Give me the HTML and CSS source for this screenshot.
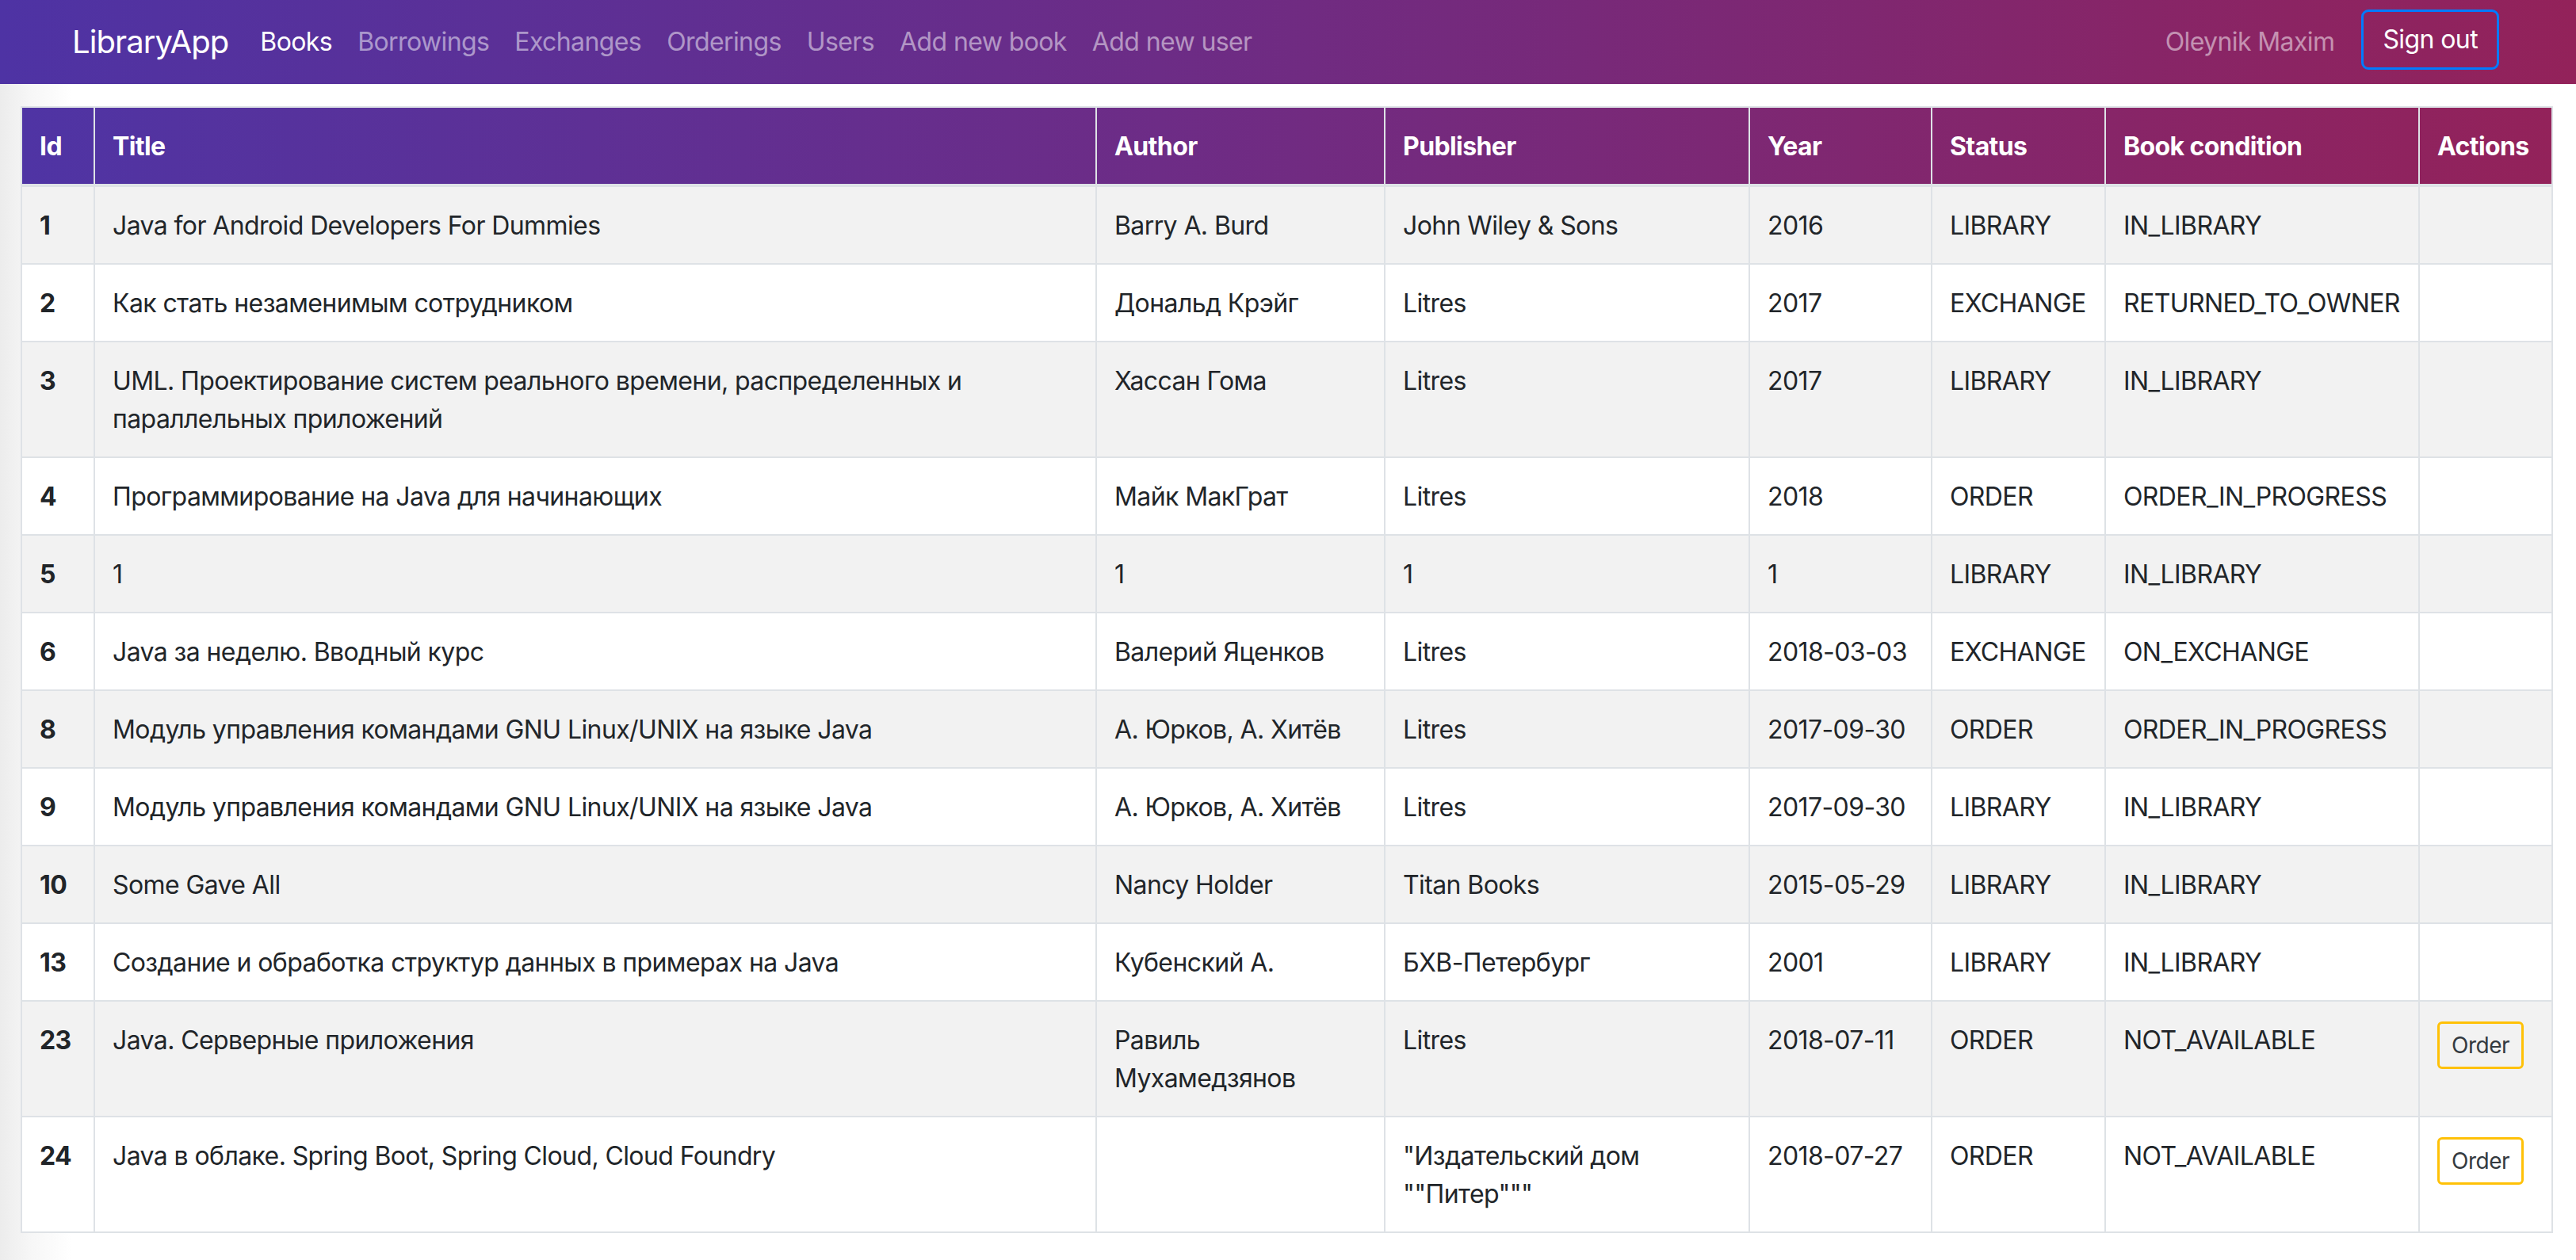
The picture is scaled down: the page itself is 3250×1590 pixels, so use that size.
FILE: index.html
```html
<!DOCTYPE html>
<html lang="en">
<head>
<meta charset="utf-8">
<title>LibraryApp</title>
<link rel="stylesheet" href="styles.css">
</head>
<body>
<nav class="navbar">
  <a class="brand" href="#">LibraryApp</a>
  <ul class="nav">
    <li><a class="nav-link active" href="#">Books</a></li>
    <li><a class="nav-link" href="#">Borrowings</a></li>
    <li><a class="nav-link" href="#">Exchanges</a></li>
    <li><a class="nav-link" href="#">Orderings</a></li>
    <li><a class="nav-link" href="#">Users</a></li>
    <li><a class="nav-link" href="#">Add new book</a></li>
    <li><a class="nav-link" href="#">Add new user</a></li>
  </ul>
  <div class="nav-right">
    <span class="nav-link user">Oleynik Maxim</span>
    <button class="btn-signout" type="button">Sign out</button>
  </div>
</nav>
<main class="content">
  <table class="books">
    <colgroup>
      <col class="c-id"><col class="c-title"><col class="c-author"><col class="c-pub"><col class="c-year"><col class="c-status"><col class="c-cond"><col class="c-act">
    </colgroup>
    <thead>
      <tr><th>Id</th><th>Title</th><th>Author</th><th>Publisher</th><th>Year</th><th>Status</th><th>Book condition</th><th>Actions</th></tr>
    </thead>
    <tbody>
      <tr><th>1</th><td>Java for Android Developers For Dummies</td><td>Barry A. Burd</td><td>John Wiley &amp; Sons</td><td>2016</td><td>LIBRARY</td><td>IN_LIBRARY</td><td></td></tr>
      <tr><th>2</th><td>Как стать незаменимым сотрудником</td><td>Дональд Крэйг</td><td>Litres</td><td>2017</td><td>EXCHANGE</td><td>RETURNED_TO_OWNER</td><td></td></tr>
      <tr><th>3</th><td>UML. Проектирование систем реального времени, распределенных и параллельных приложений</td><td>Хассан Гома</td><td>Litres</td><td>2017</td><td>LIBRARY</td><td>IN_LIBRARY</td><td></td></tr>
      <tr><th>4</th><td>Программирование на Java для начинающих</td><td>Майк МакГрат</td><td>Litres</td><td>2018</td><td>ORDER</td><td>ORDER_IN_PROGRESS</td><td></td></tr>
      <tr><th>5</th><td>1</td><td>1</td><td>1</td><td>1</td><td>LIBRARY</td><td>IN_LIBRARY</td><td></td></tr>
      <tr><th>6</th><td>Java за неделю. Вводный курс</td><td>Валерий Яценков</td><td>Litres</td><td>2018-03-03</td><td>EXCHANGE</td><td>ON_EXCHANGE</td><td></td></tr>
      <tr><th>8</th><td>Модуль управления командами GNU Linux/UNIX на языке Java</td><td>А. Юрков, А. Хитёв</td><td>Litres</td><td>2017-09-30</td><td>ORDER</td><td>ORDER_IN_PROGRESS</td><td></td></tr>
      <tr><th>9</th><td>Модуль управления командами GNU Linux/UNIX на языке Java</td><td>А. Юрков, А. Хитёв</td><td>Litres</td><td>2017-09-30</td><td>LIBRARY</td><td>IN_LIBRARY</td><td></td></tr>
      <tr><th>10</th><td>Some Gave All</td><td>Nancy Holder</td><td>Titan Books</td><td>2015-05-29</td><td>LIBRARY</td><td>IN_LIBRARY</td><td></td></tr>
      <tr><th>13</th><td>Создание и обработка структур данных в примерах на Java</td><td>Кубенский А.</td><td>БХВ-Петербург</td><td>2001</td><td>LIBRARY</td><td>IN_LIBRARY</td><td></td></tr>
      <tr><th>23</th><td>Java. Серверные приложения</td><td>Равиль Мухамедзянов</td><td>Litres</td><td>2018-07-11</td><td>ORDER</td><td>NOT_AVAILABLE</td><td><button class="btn-order" type="button">Order</button></td></tr>
      <tr><th>24</th><td>Java в облаке. Spring Boot, Spring Cloud, Cloud Foundry</td><td></td><td>"Издательский дом ""Питер"""</td><td>2018-07-27</td><td>ORDER</td><td>NOT_AVAILABLE</td><td><button class="btn-order" type="button">Order</button></td></tr>
    </tbody>
  </table>
</main>
</body>
</html>
```
FILE: styles.css
```css
html, body {
  margin: 0;
  padding: 0;
}
body {
  min-height: 1590px;
  font-family: Inter, "Noto Sans", sans-serif;
  font-size: 32px;
  line-height: 48px;
  letter-spacing: -0.6px;
  color: #212529;
  background: linear-gradient(to right, #ececec 0, #f7f7f7 40px, #ffffff 90px);
}
.navbar {
  display: flex;
  align-items: center;
  height: 106px;
  padding: 0 97px 0 91px;
  box-sizing: border-box;
  background: linear-gradient(to right, #4e33a4 0%, #6c2c86 45%, #93225a 100%);
}
.brand {
  font-size: 40px;
  line-height: 60px;
  letter-spacing: -0.9px;
  color: #fff;
  text-decoration: none;
  margin-right: 24px;
}
.nav {
  display: flex;
  list-style: none;
  margin: 0;
  padding: 0;
}
.nav-link {
  display: block;
  padding: 16px;
  color: rgba(255, 255, 255, 0.5);
  text-decoration: none;
}
.nav-link.active {
  color: #fff;
}
.nav-right {
  margin-left: auto;
  display: flex;
  align-items: center;
}
.user {
  margin-right: 18px;
}
.btn-signout {
  font-family: inherit;
  font-size: 32px;
  line-height: 48px;
  letter-spacing: -0.6px;
  color: #fff;
  background: transparent;
  border: 3px solid #007bff;
  border-radius: 9px;
  padding: 11px 24px;
  margin-top: -6px;
}
.content {
  padding: 28px 31px 30px 26px;
}
.books {
  width: 100%;
  table-layout: fixed;
  border-collapse: collapse;
  background: transparent;
}
.c-id { width: 92px; }
.c-title { width: 1264px; }
.c-author { width: 364px; }
.c-pub { width: 460px; }
.c-year { width: 230px; }
.c-status { width: 219px; }
.c-cond { width: 396px; }
.c-act { width: 168px; }
.books th, .books td {
  border: 2px solid #dee2e6;
  padding: 25px 22px 23px;
  text-align: left;
  vertical-align: top;
}
.books thead {
  background: linear-gradient(to right, #4f34a4 0%, #6d2c86 45%, #93225a 100%);
}
.books thead th {
  color: #fff;
  font-weight: 700;
  border-bottom-width: 4px;
}
.books tbody tr:nth-child(odd) {
  background: #f2f2f2;
}
.books tbody tr:nth-child(even) {
  background: #fff;
}
.books tbody th {
  font-weight: 700;
}
.btn-order {
  font-family: inherit;
  font-size: 28px;
  line-height: 42px;
  letter-spacing: -0.5px;
  color: #343a40;
  background: transparent;
  border: 3px solid #ffc107;
  border-radius: 6px;
  padding: 6px 15px;
  margin-top: 0;
}
```
